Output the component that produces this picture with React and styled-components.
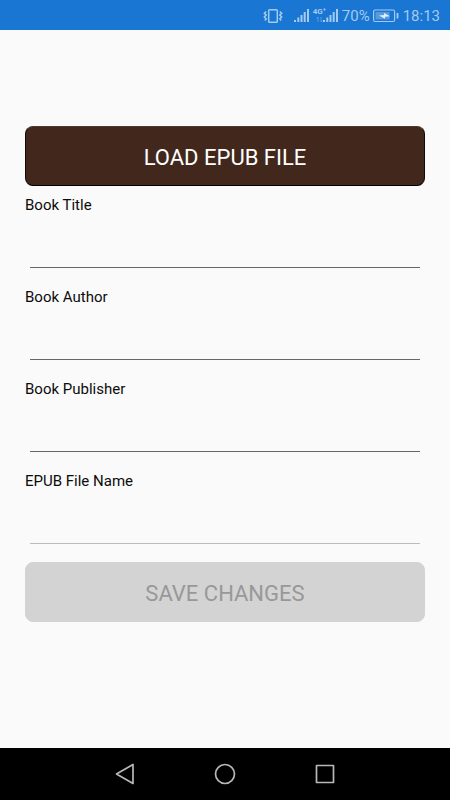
import React from "react";
import styled, { createGlobalStyle } from "styled-components";

const GlobalStyle = createGlobalStyle`
  * { box-sizing: border-box; }
  body { margin: 0; font-family: Roboto, "Liberation Sans", sans-serif; background: #fafafa; }
`;

const Screen = styled.div`
  min-height: 100vh;
  display: flex;
  flex-direction: column;
`;

const StatusBar = styled.header`
  height: 30px;
  padding: 2px 10px 0 0;
  background: #1976d2;
  color: #a3caf0;
  display: flex;
  align-items: center;
  justify-content: flex-end;
  gap: 4px;
  font-size: 15px;
  line-height: 28px;
`;

const StatusGroup = styled.div`
  display: flex;
  align-items: center;
  gap: ${(p) => p.$gap}px;
`;

const StatusIcon = styled.svg`
  display: block;
  flex: none;
  fill: none;
  stroke: currentColor;
`;

const NetworkBadge = styled.span`
  width: 10px;
  height: 16px;
  display: flex;
  flex-direction: column;
  font-size: 8px;
  font-weight: 700;
  line-height: 8px;
  white-space: nowrap;
`;

const Form = styled.form`
  flex: 1;
  display: flex;
  flex-direction: column;
  justify-content: center;
  padding: 0 25px 30px;
`;

const Fields = styled.div`
  margin-bottom: 8px;
`;

const ActionButton = styled.button`
  height: 60px;
  width: 100%;
  padding: 4px 0 0;
  border: 1px solid;
  border-color: ${(p) => (p.$primary ? "#4a3c2c #120a07 #000000" : "#d3d3d3")};
  border-radius: 8px;
  background: ${(p) => (p.$primary ? "#42281c" : "#d3d3d3")};
  color: ${(p) => (p.$primary ? "#ffffff" : "#989898")};
  font: 400 22px/28px Roboto, "Liberation Sans", sans-serif;
  text-transform: uppercase;
`;

const Field = styled.div`
  height: 92px;
  padding-top: 8px;
`;

const Label = styled.label`
  display: block;
  color: #0c0c0c;
  font-size: 15px;
  line-height: 22px;
`;

const Input = styled.input`
  display: block;
  width: calc(100% - 10px);
  height: 52px;
  margin: 0 5px;
  padding: 16px 0 8px;
  border: 0;
  border-bottom: 1px solid #666666;
  border-radius: 0;
  background: transparent;
  font: 400 18px/24px Roboto, "Liberation Sans", sans-serif;
  outline: 0;
  &:disabled { border-color: #bcbcbc; }
`;

const NavBar = styled.nav`
  height: 52px;
  background: #000000;
  display: flex;
  align-items: center;
  justify-content: center;
  gap: 60px;
`;

const NavButton = styled.button`
  width: 40px;
  height: 40px;
  padding: 8px;
  border: 0;
  background: transparent;
  color: #b8b8b8;
`;

const NavIcon = styled.svg`
  display: block;
  fill: none;
  stroke: currentColor;
  stroke-width: 1.7;
  stroke-linejoin: round;
`;

const fields = [
  { id: "title", label: "Book Title" },
  { id: "author", label: "Book Author" },
  { id: "publisher", label: "Book Publisher" },
  { id: "filename", label: "EPUB File Name", disabled: true },
];

function VibrateIcon() {
  return (
    <StatusIcon width="20" height="14" viewBox="0 0 20 14" strokeWidth="1.5">
      <rect x="5.7" y="0.8" width="8.6" height="12.4" rx="0.8" />
      <path d="M3.2 2.5 1.300 4.300l1.900 1.800L1.300 8l1.900 1.800-1.400 1.700M16.800 2.500l1.900 1.800-1.900 1.800L18.700 8l-1.900 1.800 1.400 1.700" />
    </StatusIcon>
  );
}

function SignalIcon() {
  return (
    <StatusIcon width="15" height="14" viewBox="0 0 15 14" strokeWidth="2">
      <path d="M1 13v-2M4.300 13V8.500M7.500 13V6M10.700 13V3M14 13V0" />
    </StatusIcon>
  );
}

function BatteryIcon() {
  return (
    <StatusIcon width="26" height="14" viewBox="0 0 26 14" strokeWidth="1.2">
      <rect x="0.6" y="1" width="21" height="11.500" rx="1.500" />
      <rect x="2.500" y="3" width="14" height="7.500" fill="currentColor" fillOpacity="0.45" stroke="none" />
      <path d="M6 6.500 11 6 11 4l6 3.200-5 .5v2z" fill="#e3f0fc" stroke="none" />
      <path d="M24.500 4v5.500" strokeWidth="1.800" />
    </StatusIcon>
  );
}

export default function App() {
  return (
    <Screen>
      <GlobalStyle />
      <StatusBar>
        <StatusGroup $gap={11}>
          <VibrateIcon />
          <SignalIcon />
        </StatusGroup>
        <StatusGroup $gap={0}>
          <NetworkBadge>
            <span>4G⁺</span>
            <StatusIcon width="10" height="7" viewBox="0 0 10 7" strokeOpacity="0.45">
              <path d="M5 6V1L3.500 2.500M8 1v5l1.500-1.500" />
            </StatusIcon>
          </NetworkBadge>
          <SignalIcon />
        </StatusGroup>
        <StatusGroup $gap={3}>
          <span>70%</span>
          <BatteryIcon />
        </StatusGroup>
        <span>18:13</span>
      </StatusBar>
      <Form onSubmit={(e) => e.preventDefault()}>
        <ActionButton type="button" $primary>Load EPUB file</ActionButton>
        <Fields>
          {fields.map((f) => (
            <Field key={f.id}>
              <Label htmlFor={f.id}>{f.label}</Label>
              <Input id={f.id} type="text" disabled={f.disabled} />
            </Field>
          ))}
        </Fields>
        <ActionButton type="submit" disabled>Save changes</ActionButton>
      </Form>
      <NavBar>
        <NavButton type="button" aria-label="Back">
          <NavIcon width="24" height="24"><path d="M20 2.500v19L3.500 12z" /></NavIcon>
        </NavButton>
        <NavButton type="button" aria-label="Home">
          <NavIcon width="24" height="24"><circle cx="12" cy="12" r="9.500" /></NavIcon>
        </NavButton>
        <NavButton type="button" aria-label="Recent apps">
          <NavIcon width="24" height="24"><path d="M3.500 3.500h17v17h-17z" /></NavIcon>
        </NavButton>
      </NavBar>
    </Screen>
  );
}
